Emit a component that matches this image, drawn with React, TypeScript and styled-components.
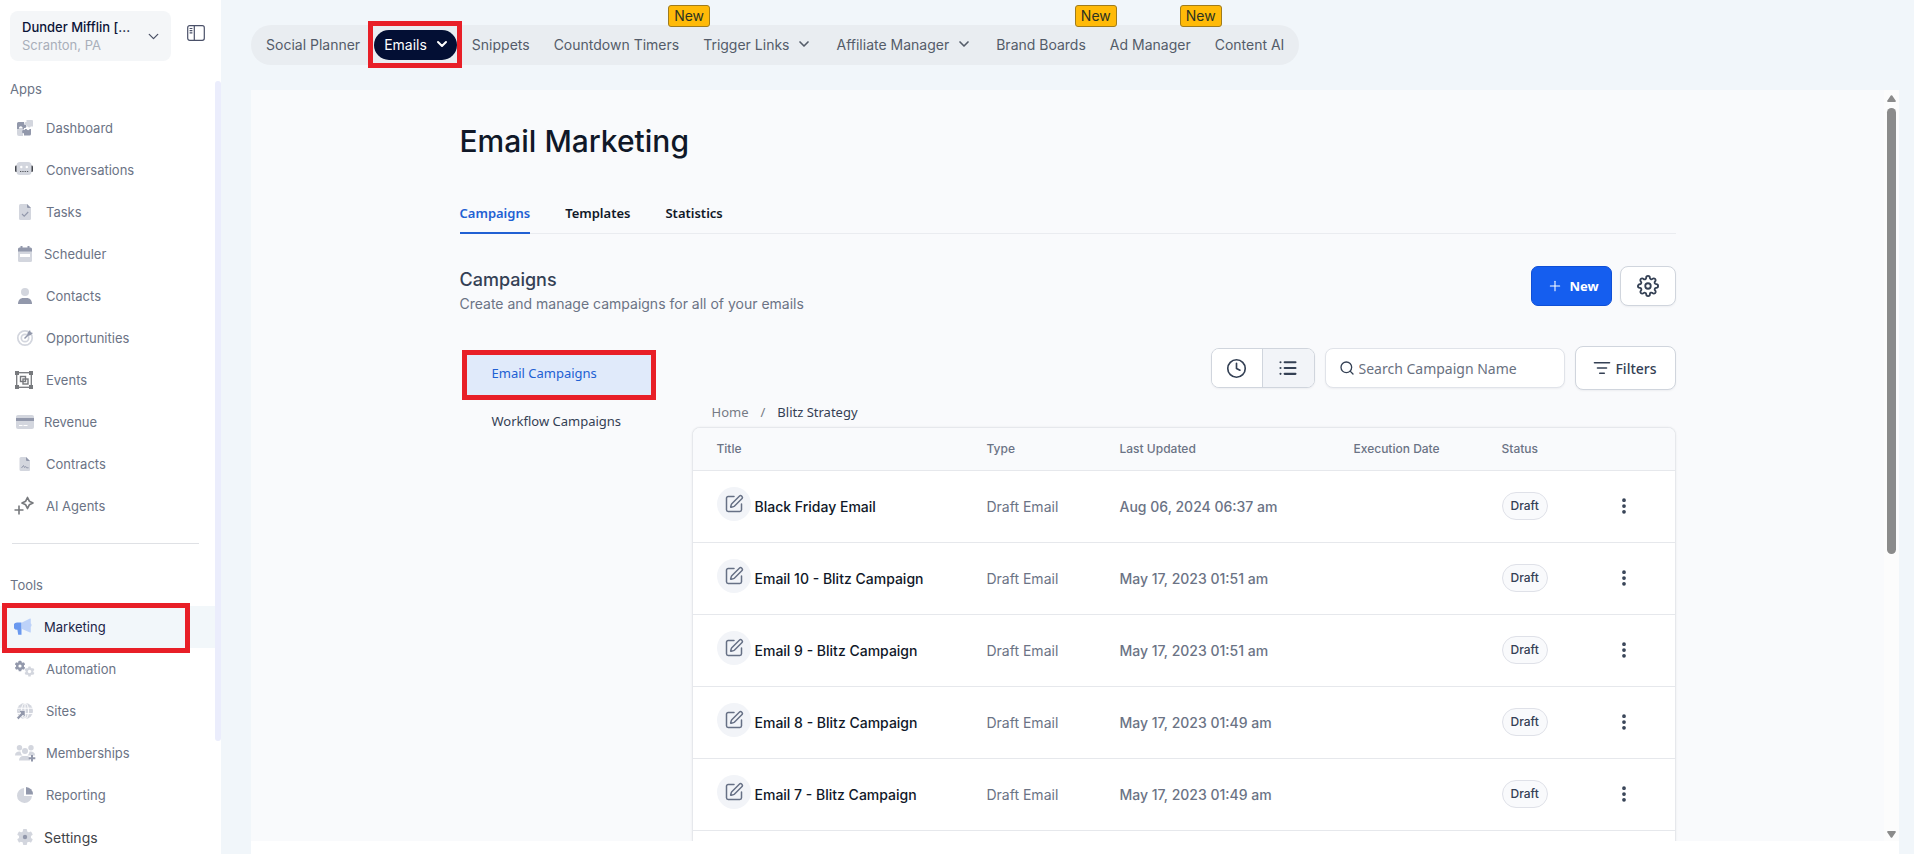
import React from "react";
import styled, { createGlobalStyle, css } from "styled-components";
import { ChevronDown, Clock, EllipsisVertical, List, ListFilter, Plus, Search, SquarePen } from "lucide-react";
import { FiSettings } from "react-icons/fi";

const inter = `Inter, "Liberation Sans", sans-serif`;
const humanist = `"Noto Sans", "Open Sans", sans-serif`;

const color = {
  page: "#f1f6fa",
  surface: "#f9fafc",
  line: "#e6e8ec",
  border: "#d0d5dd",
  muted: "#6b7385",
  ink: "#101828",
  slate: "#344054",
  blue: "#155eef",
  link: "#2160d3",
  mark: "#e81f27",
  iconDark: "#9298ab",
  iconLight: "#d3d6de",
};

const GlobalStyle = createGlobalStyle`
  *, *::before, *::after { box-sizing: border-box; }
  body { margin: 0; background: ${color.page}; font-family: ${inter}; font-size: 14px; color: ${color.ink}; }
  button, input { font: inherit; color: inherit; margin: 0; }
  button { cursor: pointer; }
  a { color: inherit; text-decoration: none; }
  h1, h2, p, ul { margin: 0; padding: 0; }
  ul { list-style: none; }
  svg { display: block; flex: none; }
`;

const Shell = styled.div`
  display: flex;
  height: 100vh;
  overflow: hidden;
`;

/* ---------- sidebar ---------- */

const Sidebar = styled.aside`
  display: flex;
  flex-direction: column;
  flex: none;
  width: 221px;
  background: #fff;
`;

const SidebarTop = styled.div`
  display: flex;
  flex: none;
  align-items: flex-start;
  height: 81px;
  padding: 11px 16px 0 10px;
  justify-content: space-between;
`;

const AccountButton = styled.button`
  display: flex;
  align-items: center;
  justify-content: space-between;
  width: 161px;
  height: 50px;
  padding: 0 9px 0 12px;
  border: 0;
  border-radius: 8px;
  background: #f4f6f8;
  text-align: left;
  color: #4a5166;
`;

const AccountName = styled.span`
  display: block;
  font-size: 13px;
  line-height: 18px;
  font-weight: 500;
  color: #0b1437;
`;

const AccountPlace = styled.span`
  display: block;
  font-size: 13px;
  line-height: 18px;
  color: #a9afba;
`;

const PlainButton = styled.button`
  display: grid;
  place-items: center;
  padding: 0;
  border: 0;
  background: none;
  color: ${color.slate};
`;

const ToggleButton = styled(PlainButton)`
  height: 44px;
`;

const SidebarScroll = styled.div`
  display: flex;
  flex: 1;
  min-height: 0;
  overflow: hidden;
`;

const SidebarNav = styled.nav`
  flex: 1;
  min-width: 0;
`;

const SidebarThumb = styled.div`
  flex: none;
  width: 6px;
  height: 660px;
  border-radius: 3px;
  background: #ebedfc;
`;

const GroupLabel = styled.p`
  padding-left: 10px;
  line-height: 16px;
  font-size: 13px;
  color: ${color.muted};
`;

const ItemList = styled.ul<{ $spaced?: boolean }>`
  padding-top: ${(p) => (p.$spaced ? 13 : 10)}px;
`;

const Divider = styled.hr`
  height: 1px;
  margin: 16px 16px 33px 12px;
  border: 0;
  background: #dfe1e5;
`;

const markFrame = css`
  content: "";
  position: absolute;
  border: 5px solid ${color.mark};
  pointer-events: none;
`;

const NavItem = styled.a<{ $tight?: boolean; $tone?: "active" | "strong" }>`
  position: relative;
  display: flex;
  align-items: center;
  gap: ${(p) => (p.$tight ? 8 : 10)}px;
  height: 42px;
  padding-left: 14px;
  font-size: ${(p) => (p.$tone === "strong" ? 14 : 13)}px;
  color: ${(p) => (p.$tone === "active" ? "#1b2447" : p.$tone === "strong" ? "#3f4347" : color.muted)};
  ${(p) =>
    p.$tone === "active" &&
    css`
      background: #f2f7fa;
      &::after {
        ${markFrame}
        inset: -3px 25px -5px 2px;
        z-index: 1;
      }
    `}
`;

/* ---------- top bar ---------- */

const Main = styled.main`
  display: flex;
  flex-direction: column;
  flex: 1;
  min-width: 0;
  padding: 25px 15px 0 30px;
`;

const TopNav = styled.nav`
  display: flex;
  align-items: center;
  align-self: flex-start;
  flex: none;
  gap: 24px;
  height: 40px;
  padding: 0 15px;
  border-radius: 20px;
  background: #e9edf1;
  white-space: nowrap;
  color: #545c69;
`;

const TopLink = styled.a`
  position: relative;
  display: flex;
  align-items: center;
  gap: 7px;
  height: 30px;
  padding-bottom: 2px;
`;

const TopActive = styled(TopLink)`
  margin: 0 -9px 0 -10px;
  padding: 0 7px 2px 10px;
  border-radius: 15px;
  background: #030f34;
  color: #fff;
  &::after {
    ${markFrame}
    inset: -9px -5px -8px -6px;
  }
`;

const NewBadge = styled.span`
  position: absolute;
  left: calc(100% - 11px);
  bottom: 33px;
  height: 22px;
  padding: 0 5px;
  border: 1px solid #a07c1c;
  border-radius: 3px;
  background: #ffba08;
  line-height: 20px;
  color: #2c3322;
`;

/* ---------- content panel ---------- */

const Frame = styled.div`
  display: flex;
  flex: 1;
  min-height: 0;
  margin-top: 25px;
  padding-bottom: 13px;
  background: #fff;
`;

const Panel = styled.div`
  flex: 1;
  min-width: 0;
  overflow: hidden;
  padding: 0 24px;
  background: ${color.surface};
`;

const Container = styled.div`
  max-width: 1216px;
  margin: 0 auto;
`;

const ScrollTrack = styled.div`
  display: flex;
  flex-direction: column;
  align-items: center;
  flex: none;
  width: 15px;
  padding: 5px 0 3px;
  background: #fcfcfc;
  color: #8b8b8b;
`;

const ScrollThumb = styled.div`
  width: 9px;
  height: 60%;
  margin: 6px 0 auto;
  border-radius: 5px;
  background: #8b8b8b;
`;

const PageTitle = styled.h1`
  padding: 32px 0 29px;
  font-size: 30px;
  line-height: 38px;
  font-weight: 500;
`;

const Tabs = styled.div`
  display: flex;
  gap: 35px;
  border-bottom: 1px solid #eaecf0;
`;

const Tab = styled.button<{ $active?: boolean }>`
  height: 45px;
  margin-bottom: -1px;
  padding: 4px 0 0;
  border: 0;
  border-bottom: 2px solid ${(p) => (p.$active ? color.link : "transparent")};
  background: none;
  font-family: ${humanist};
  font-size: 13px;
  font-weight: 600;
  color: ${(p) => (p.$active ? color.link : color.ink)};
`;

const SectionHead = styled.div`
  display: flex;
  align-items: flex-start;
  justify-content: space-between;
  padding-top: 32px;
`;

const SectionTitle = styled.h2`
  font-size: 18px;
  line-height: 28px;
  font-weight: 500;
  color: ${color.slate};
`;

const SectionText = styled.p`
  line-height: 20px;
  color: ${color.muted};
`;

const ButtonRow = styled.div`
  display: flex;
  align-items: center;
  gap: 8px;
`;

const PrimaryButton = styled.button`
  display: flex;
  align-items: center;
  justify-content: center;
  gap: 6px;
  width: 81px;
  height: 40px;
  padding: 0 0 0 4px;
  border: 1px solid #0f4fd6;
  border-radius: 7px;
  background: ${color.blue};
  font-family: ${humanist};
  font-size: 13px;
  font-weight: 700;
  color: #fff;
`;

const outlined = css`
  border: 1px solid ${color.border};
  border-radius: 8px;
  background: #fff;
  box-shadow: 0 1px 2px rgba(16, 24, 40, 0.05);
  color: ${color.slate};
`;

const IconButton = styled.button`
  ${outlined}
  display: grid;
  place-items: center;
  width: 56px;
  height: 40px;
  padding: 0;
`;

const FilterButton = styled.button`
  ${outlined}
  display: flex;
  align-items: center;
  justify-content: center;
  gap: 4px;
  width: 101px;
  height: 44px;
  padding: 0;
  font-family: ${humanist};
  font-size: 14px;
  font-weight: 500;
`;

const ViewSwitch = styled.div`
  ${outlined}
  display: flex;
  width: 104px;
  height: 40px;
  overflow: hidden;
`;

const ViewButton = styled.button<{ $active?: boolean }>`
  display: grid;
  place-items: center;
  flex: 1;
  padding: 0;
  border: 0;
  background: ${(p) => (p.$active ? "#f2f4f8" : "#fff")};
  color: ${color.slate};
  & + & {
    border-left: 1px solid ${color.border};
  }
`;

const SearchBox = styled.label`
  ${outlined}
  display: flex;
  align-items: center;
  gap: 4px;
  width: 240px;
  height: 40px;
  padding: 0 13px;
  border-color: #e0e3e9;
`;

const SearchInput = styled.input`
  flex: 1;
  min-width: 0;
  padding: 0;
  border: 0;
  outline: 0;
  background: none;
  font-family: ${humanist};
  font-size: 14px;
  &::placeholder {
    color: #69717f;
    opacity: 1;
  }
`;

const Columns = styled.div`
  display: grid;
  grid-template-columns: 196px minmax(0, 1fr);
  column-gap: 36px;
  padding-top: 32px;
`;

const SideMenu = styled.nav`
  display: flex;
  flex-direction: column;
  gap: 2px;
  padding: 4px 0 0 2px;
`;

const SideLink = styled.a<{ $active?: boolean }>`
  display: flex;
  align-items: center;
  height: ${(p) => (p.$active ? 50 : 38)}px;
  padding: ${(p) => (p.$active ? "0 0 4px 25px" : "0 0 0 30px")};
  border: ${(p) => (p.$active ? `5px solid ${color.mark}` : "0")};
  background: ${(p) => (p.$active ? "#e0eafa" : "none")};
  font-family: ${humanist};
  font-size: 13px;
  color: ${(p) => (p.$active ? color.link : color.slate)};
`;

const Toolbar = styled.div`
  display: flex;
  align-items: center;
  justify-content: flex-end;
  gap: 10px;
`;

const Breadcrumb = styled.nav`
  display: flex;
  gap: 12px;
  padding: 12px 0 5px 20px;
  font-family: ${humanist};
  font-size: 13px;
  line-height: 20px;
  color: #767b85;
`;

const Crumb = styled.span`
  color: ${color.slate};
`;

const TableCard = styled.div`
  overflow: hidden;
  padding-bottom: 24px;
  border: 1px solid ${color.line};
  border-radius: 8px 8px 0 0;
  background: #fff;
  box-shadow: 0 0 2px rgba(16, 24, 40, 0.08);
`;

const Table = styled.table`
  width: 100%;
  table-layout: fixed;
  border-collapse: collapse;
`;

const HeadCell = styled.th`
  height: 42px;
  padding: 0 0 0 24px;
  border-bottom: 1px solid ${color.line};
  background: ${color.surface};
  text-align: left;
  font-size: 12px;
  font-weight: 500;
  color: ${color.muted};
`;

const Cell = styled.td<{ $medium?: boolean }>`
  height: 72px;
  padding: 0 0 0 24px;
  border-bottom: 1px solid ${color.line};
  font-weight: ${(p) => (p.$medium ? 500 : 400)};
  white-space: nowrap;
  color: ${color.muted};
`;

const TitleGroup = styled.div`
  display: flex;
  align-items: center;
  gap: 4px;
  font-weight: 500;
  color: ${color.ink};
`;

const EditDisc = styled.span`
  display: grid;
  place-items: center;
  width: 34px;
  height: 34px;
  margin-bottom: 4px;
  border-radius: 50%;
  background: #f2f4f8;
  color: #667085;
`;

const StatusPill = styled.span`
  display: inline-block;
  padding: 0 8px;
  border: 1px solid #dfe1e8;
  border-radius: 14px;
  background: #f9fafc;
  font-size: 12px;
  line-height: 26px;
  font-weight: 500;
  color: ${color.slate};
`;

/* ---------- icons ---------- */

const D = color.iconDark;
const L = color.iconLight;

const Glyph = ({ children }: { children: React.ReactNode }) => (
  <svg width="22" height="22" viewBox="0 0 22 22" fill="none" aria-hidden="true">
    {children}
  </svg>
);

const Cog = ({ cx, cy, r, teeth, fill, hole, holeFill = "#fff" }: { cx: number; cy: number; r: number; teeth: number; fill: string; hole: number; holeFill?: string }) => (
  <g>
    {Array.from({ length: teeth }, (_, i) => (
      <rect key={i} x={cx - r * 0.26} y={cy - r} width={r * 0.52} height={r} rx={r * 0.12} fill={fill} transform={`rotate(${(360 / teeth) * i} ${cx} ${cy})`} />
    ))}
    <circle cx={cx} cy={cy} r={r * 0.76} fill={fill} />
    <circle cx={cx} cy={cy} r={hole} fill={holeFill} />
  </g>
);

const icons: Record<string, React.ReactNode> = {
  Dashboard: (
    <Glyph>
      <path d="M3 11h6v8H5a2 2 0 0 1-2-2z" fill={L} />
      <path d="M3 6.500A1.500 1.500 0 0 1 4.500 5H10v2.600a1.800 1.800 0 1 1 0 3.400v1H8.500a1.900 1.900 0 1 0-3.400 0H3z" fill={D} />
      <path d="M11 12h1.500a1.700 1.700 0 0 0 3.200 0H17v5a1.500 1.500 0 0 1-1.500 1.500H10v-2.200a1.800 1.800 0 1 1 1-3.300z" fill={D} />
      <path d="M12.500 3H18a1 1 0 0 1 1 1v5.500h-2.300a1.600 1.600 0 0 1-3 0h-1.200V8a1.600 1.600 0 1 1 0-3z" fill={L} />
    </Glyph>
  ),
  Conversations: (
    <Glyph>
      <rect x="1" y="6.500" width="3" height="6.500" rx="1.200" fill="#43464d" />
      <rect x="16" y="6.500" width="3" height="6.500" rx="1.200" fill="#43464d" />
      <rect x="2.500" y="3" width="15" height="13" rx="3.500" fill={L} />
      <circle cx="7.300" cy="8" r="1.200" fill="#fff" />
      <circle cx="12.800" cy="8" r="1.200" fill="#fff" />
      <path d="M6 12.500h8.500" stroke="#55585f" strokeWidth="1.200" strokeDasharray="1.300 1" />
    </Glyph>
  ),
  Tasks: (
    <Glyph>
      <path d="M6.500 3H13l4 4v10.500a1.500 1.500 0 0 1-1.500 1.500h-9A1.500 1.500 0 0 1 5 17.500v-13A1.500 1.500 0 0 1 6.500 3z" fill={L} />
      <path d="M13 3l4 4h-3a1 1 0 0 1-1-1z" fill={D} />
      <path d="M8 13l2.200 2.200L14.200 11" stroke={D} strokeWidth="1.100" />
    </Glyph>
  ),
  Scheduler: (
    <Glyph>
      <rect x="4" y="6" width="14" height="13" rx="1.500" fill={L} />
      <path d="M4 8.500V6a1.500 1.500 0 0 1 1.500-1.500h11A1.500 1.500 0 0 1 18 6v2.500zM6.500 3h2v2h-2zM13.500 3h2v2h-2z" fill={D} />
      <rect x="6" y="11" width="10" height="3" fill="#fff" />
    </Glyph>
  ),
  Contacts: (
    <Glyph>
      <circle cx="11" cy="7" r="4" fill={L} />
      <path d="M4 19c0-4 2.500-6 5-6h4c2.500 0 5 2 5 6z" fill={D} />
    </Glyph>
  ),
  Opportunities: (
    <Glyph>
      <circle cx="11" cy="11" r="7.200" stroke={L} strokeWidth="1.700" />
      <circle cx="11" cy="11" r="3.700" stroke={L} strokeWidth="1.700" />
      <path d="M10.500 11.500L15 7" stroke={D} strokeWidth="1.400" />
      <path d="M13.500 8.500V6l2.500-3 .7 2.200 2.300.8-3 2.500z" fill={D} />
    </Glyph>
  ),
  Events: (
    <Glyph>
      <rect x="2.700" y="3.700" width="14.600" height="14.600" stroke="#77797d" strokeWidth="1.300" />
      <path d="M1 2h4v4H1zM15 2h4v4h-4zM1 16h4v4H1zM15 16h4v4h-4z" fill="#77797d" />
      <rect x="6.500" y="7.500" width="5" height="5" stroke="#77797d" strokeWidth="1.400" />
      <rect x="9" y="10" width="5" height="5" stroke="#77797d" strokeWidth="1.400" />
    </Glyph>
  ),
  Revenue: (
    <Glyph>
      <rect x="2" y="4" width="18" height="14" rx="2" fill={L} />
      <path d="M2 7h18v3H2z" fill={D} />
      <path d="M5 14.500h3.500M9.500 14.500h4" stroke="#fff" strokeWidth="1" />
    </Glyph>
  ),
  Contracts: (
    <Glyph>
      <path d="M7 4h5l4 4v9a1 1 0 0 1-1 1H7a1.500 1.500 0 0 1-1.500-1.500v-11A1.500 1.500 0 0 1 7 4z" fill={L} />
      <path d="M12 4l4 4h-3a1 1 0 0 1-1-1z" fill={D} />
      <path d="M7.500 15l2-2.500 1 2 1.300-1 .8 1.300h2" stroke={D} strokeWidth="1" />
    </Glyph>
  ),
  "AI Agents": (
    <Glyph>
      <path d="M13.500 2.500L15.300 6.200 19 8l-3.700 1.800L13.500 13.500 11.700 9.800 8 8l3.700-1.800z" stroke="#77797d" strokeWidth="1.700" strokeLinejoin="round" />
      <path d="M5 10.500v9M.5 15h9" stroke="#77797d" strokeWidth="1.600" />
    </Glyph>
  ),
  Marketing: (
    <Glyph>
      <path d="M8 6.500L16 2.500a.6.600 0 0 1 .8.500v4.500c1 .3 1 3 0 3.300V16a.6.600 0 0 1-.8.500L8 13z" fill="#bdd2f9" />
      <path d="M3 6.500h4.500v12.300H4.200l-.8-5A3.500 3.500 0 0 1 3 6.500z" fill="#6a99ef" />
    </Glyph>
  ),
  Automation: (
    <Glyph>
      <Cog cx={6} cy={8} r={5.3} teeth={6} fill={D} hole={1.6} />
      <Cog cx={15.5} cy={13.5} r={5} teeth={6} fill={L} hole={1.7} />
    </Glyph>
  ),
  Sites: (
    <Glyph>
      <circle cx="11" cy="11" r="8" fill={L} />
      <ellipse cx="11" cy="11" rx="3.500" ry="8" stroke="#fff" strokeWidth="1" />
      <path d="M3 8.200h16M3 13.600h16M11 3v16" stroke="#fff" strokeWidth="1" />
      <path d="M4.500 10.500H11v6.500l-2-2-4.500 4.500-1.800-1.800L7 13z" fill={D} stroke="#fff" strokeWidth=".5" />
    </Glyph>
  ),
  Memberships: (
    <Glyph>
      <circle cx="5.500" cy="5.700" r="2.700" fill={L} />
      <circle cx="17" cy="5.700" r="2.700" fill={L} />
      <circle cx="11" cy="9" r="3" fill={L} />
      <path d="M1 13.500c0-3 2-4 4-4h1.500c.3 2 1 3 2 4zM21 13.500c0-3-2-4-4-4h-1.500c-.3 2-1 3-2 4zM5 18.500c0-3 2-4.500 4-4.500h4c2 0 3 1.500 3 4.500z" fill={L} />
      <path d="M18 13v6.500M14.700 16.200h6.600" stroke={D} strokeWidth="2" />
    </Glyph>
  ),
  Reporting: (
    <Glyph>
      <path d="M10 4a7.500 7.500 0 1 0 8 8h-8z" fill={L} />
      <path d="M12 3a7.500 7.500 0 0 1 7 7.500h-7z" fill={D} />
    </Glyph>
  ),
  Settings: (
    <Glyph>
      <Cog cx={11} cy={11} r={8} teeth={6} fill={L} hole={2.2} holeFill={D} />
    </Glyph>
  ),
};

const SidebarToggleIcon = () => (
  <svg width="18" height="16" viewBox="0 0 18 16" fill="none" stroke="#4a5068" strokeWidth="1.200" aria-hidden="true">
    <rect x=".7" y=".7" width="16.600" height="14.600" rx="2" />
    <path d="M7.300 1v14M2.600 3.500h2.800M2.600 5.700h2.800M2.600 7.900h2.800" />
  </svg>
);

const ScrollArrow = ({ down }: { down?: boolean }) => (
  <svg width="9" height="7" viewBox="0 0 9 7" fill="currentColor" aria-hidden="true">
    {down ? <path d="M.8 0h7.400q1.200.8.400 1.600L5.200 6.400q-.7.800-1.400 0L.4 1.600Q-.4.800.8 0z" /> : <path d="M.8 7h7.400q1.200-.8.400-1.600L5.200.6q-.7-.8-1.400 0L.4 5.400Q-.4 6.200.8 7z" />}
  </svg>
);

/* ---------- data ---------- */

type Item = { label: string; tight?: boolean; tone?: "active" | "strong" };

const apps: Item[] = [
  { label: "Dashboard" },
  { label: "Conversations" },
  { label: "Tasks" },
  { label: "Scheduler", tight: true },
  { label: "Contacts" },
  { label: "Opportunities" },
  { label: "Events" },
  { label: "Revenue", tight: true },
  { label: "Contracts" },
  { label: "AI Agents" },
];

const tools: Item[] = [
  { label: "Marketing", tight: true, tone: "active" },
  { label: "Automation" },
  { label: "Sites" },
  { label: "Memberships" },
  { label: "Reporting" },
  { label: "Settings", tight: true, tone: "strong" },
];

const topLinks = [
  { label: "Snippets" },
  { label: "Countdown Timers", badge: true },
  { label: "Trigger Links", menu: true },
  { label: "Affiliate Manager", menu: true },
  { label: "Brand Boards", badge: true },
  { label: "Ad Manager", badge: true },
  { label: "Content AI" },
];

const campaigns = [
  { title: "Black Friday Email", updated: "Aug 06, 2024 06:37 am" },
  { title: "Email 10 - Blitz Campaign", updated: "May 17, 2023 01:51 am" },
  { title: "Email 9 - Blitz Campaign", updated: "May 17, 2023 01:51 am" },
  { title: "Email 8 - Blitz Campaign", updated: "May 17, 2023 01:49 am" },
  { title: "Email 7 - Blitz Campaign", updated: "May 17, 2023 01:49 am" },
];

const columnWidths = [270, 133, 234, 148, 112];

const NavGroup = ({ items, spaced }: { items: Item[]; spaced?: boolean }) => (
  <ItemList $spaced={spaced}>
    {items.map((item) => (
      <li key={item.label}>
        <NavItem href="#" $tight={item.tight} $tone={item.tone}>
          {icons[item.label]}
          {item.label}
        </NavItem>
      </li>
    ))}
  </ItemList>
);

export default function App() {
  return (
    <Shell>
      <GlobalStyle />
      <Sidebar>
        <SidebarTop>
          <AccountButton>
            <span>
              <AccountName>Dunder Mifflin [...</AccountName>
              <AccountPlace>Scranton, PA</AccountPlace>
            </span>
            <ChevronDown size={17} strokeWidth={1.8} />
          </AccountButton>
          <ToggleButton aria-label="Toggle sidebar">
            <SidebarToggleIcon />
          </ToggleButton>
        </SidebarTop>
        <SidebarScroll>
          <SidebarNav>
            <GroupLabel>Apps</GroupLabel>
            <NavGroup items={apps} />
            <Divider />
            <GroupLabel>Tools</GroupLabel>
            <NavGroup items={tools} spaced />
          </SidebarNav>
          <SidebarThumb />
        </SidebarScroll>
      </Sidebar>

      <Main>
        <TopNav>
          <TopLink href="#">Social Planner</TopLink>
          <TopActive href="#">
            Emails
            <ChevronDown size={16} strokeWidth={3} />
          </TopActive>
          {topLinks.map((link) => (
            <TopLink href="#" key={link.label}>
              {link.label}
              {link.menu && <ChevronDown size={16} strokeWidth={2.5} />}
              {link.badge && <NewBadge>New</NewBadge>}
            </TopLink>
          ))}
        </TopNav>

        <Frame>
          <Panel>
            <Container>
              <PageTitle>Email Marketing</PageTitle>
              <Tabs role="tablist">
                <Tab role="tab" aria-selected="true" $active>
                  Campaigns
                </Tab>
                <Tab role="tab">Templates</Tab>
                <Tab role="tab">Statistics</Tab>
              </Tabs>

              <SectionHead>
                <div>
                  <SectionTitle>Campaigns</SectionTitle>
                  <SectionText>Create and manage campaigns for all of your emails</SectionText>
                </div>
                <ButtonRow>
                  <PrimaryButton>
                    <Plus size={16} strokeWidth={1.6} />
                    New
                  </PrimaryButton>
                  <IconButton aria-label="Campaign settings">
                    <FiSettings size={22} />
                  </IconButton>
                </ButtonRow>
              </SectionHead>

              <Columns>
                <SideMenu>
                  <SideLink href="#" $active>
                    Email Campaigns
                  </SideLink>
                  <SideLink href="#">Workflow Campaigns</SideLink>
                </SideMenu>

                <div>
                  <Toolbar>
                    <ViewSwitch>
                      <ViewButton aria-label="Recent">
                        <Clock size={21} strokeWidth={1.9} />
                      </ViewButton>
                      <ViewButton aria-label="List" $active>
                        <List size={20} strokeWidth={2.5} />
                      </ViewButton>
                    </ViewSwitch>
                    <SearchBox>
                      <Search size={16} strokeWidth={2} />
                      <SearchInput type="search" aria-label="Search campaigns" placeholder="Search Campaign Name" />
                    </SearchBox>
                    <FilterButton>
                      <ListFilter size={18} strokeWidth={2.2} />
                      Filters
                    </FilterButton>
                  </Toolbar>

                  <Breadcrumb aria-label="Breadcrumb">
                    <a href="#">Home</a>
                    <span>/</span>
                    <Crumb>Blitz Strategy</Crumb>
                  </Breadcrumb>

                  <TableCard>
                    <Table>
                      <colgroup>
                        {columnWidths.map((w, i) => (
                          <col key={i} width={w} />
                        ))}
                        <col />
                      </colgroup>
                      <thead>
                        <tr>
                          <HeadCell>Title</HeadCell>
                          <HeadCell>Type</HeadCell>
                          <HeadCell>Last Updated</HeadCell>
                          <HeadCell>Execution Date</HeadCell>
                          <HeadCell>Status</HeadCell>
                          <HeadCell aria-label="Actions" />
                        </tr>
                      </thead>
                      <tbody>
                        {campaigns.map((c) => (
                          <tr key={c.title}>
                            <Cell>
                              <TitleGroup>
                                <EditDisc>
                                  <SquarePen size={20} strokeWidth={1.8} />
                                </EditDisc>
                                {c.title}
                              </TitleGroup>
                            </Cell>
                            <Cell>Draft Email</Cell>
                            <Cell $medium>{c.updated}</Cell>
                            <Cell />
                            <Cell>
                              <StatusPill>Draft</StatusPill>
                            </Cell>
                            <Cell>
                              <PlainButton aria-label={`Actions for ${c.title}`}>
                                <EllipsisVertical size={20} strokeWidth={2.5} />
                              </PlainButton>
                            </Cell>
                          </tr>
                        ))}
                      </tbody>
                    </Table>
                  </TableCard>
                </div>
              </Columns>
            </Container>
          </Panel>
          <ScrollTrack aria-hidden="true">
            <ScrollArrow />
            <ScrollThumb />
            <ScrollArrow down />
          </ScrollTrack>
        </Frame>
      </Main>
    </Shell>
  );
}
